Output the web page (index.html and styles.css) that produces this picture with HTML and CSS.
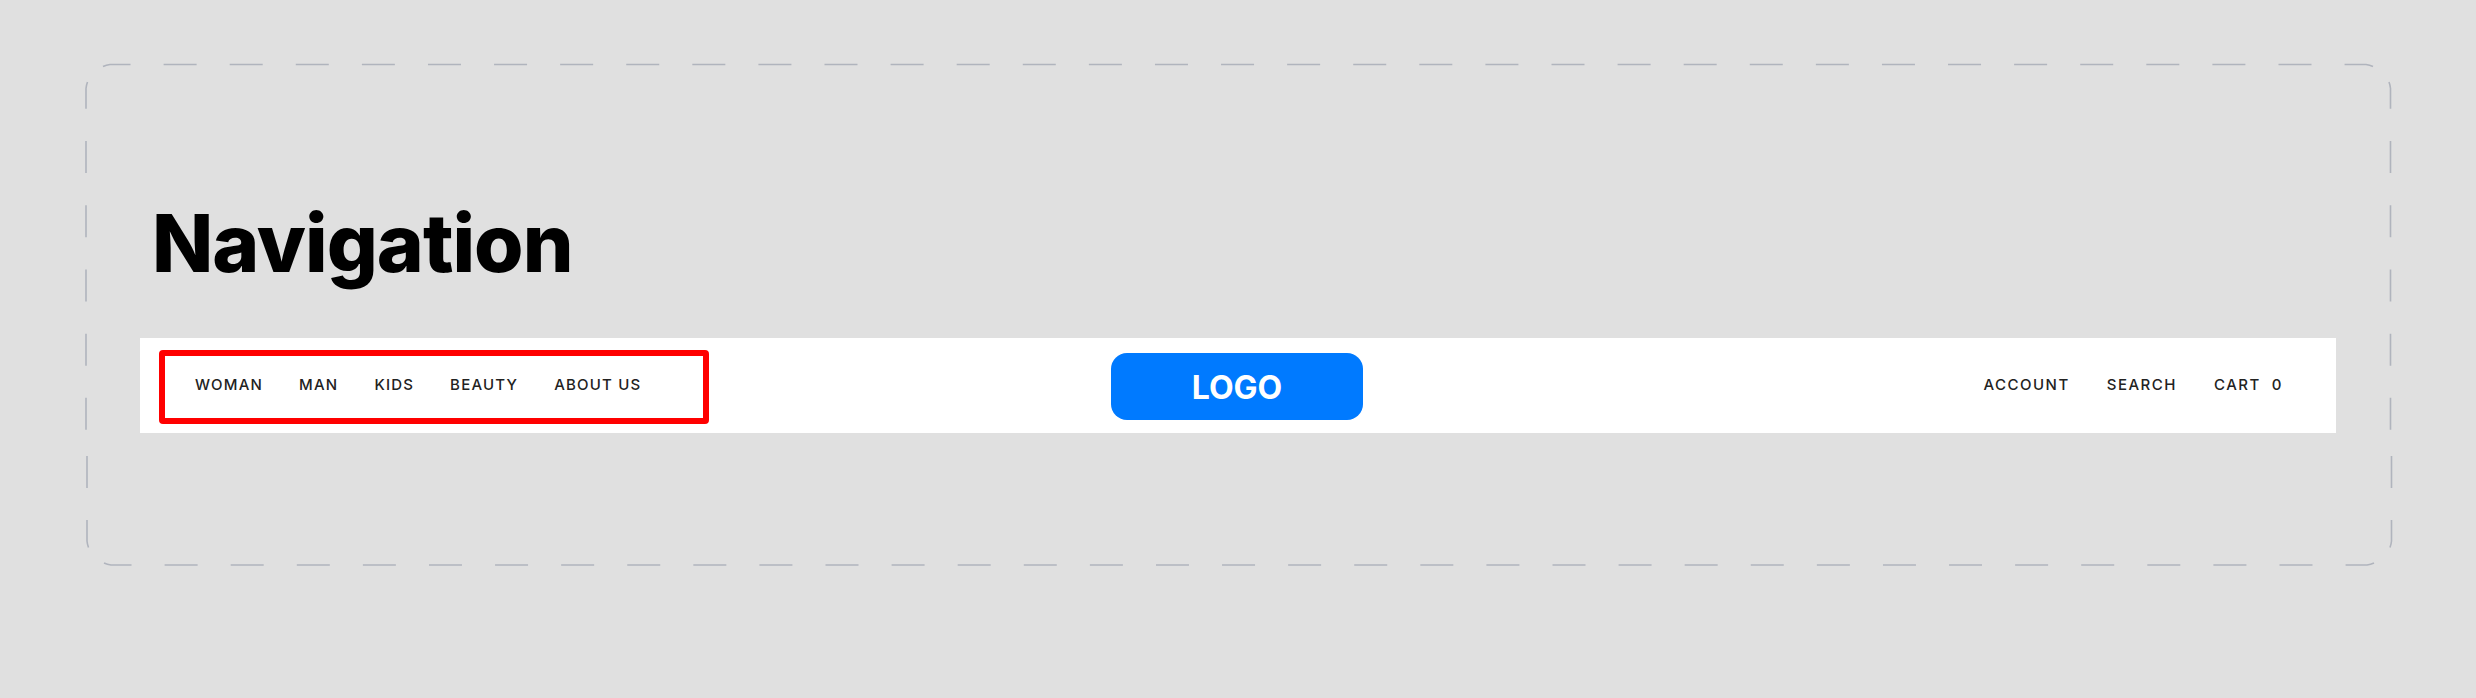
FILE: index.html
```html
<!DOCTYPE html>
<html lang="en">
<head>
<meta charset="utf-8">
<title>Navigation</title>
<link rel="stylesheet" href="styles.css">
</head>
<body>
<svg class="frame" width="2476" height="698" viewBox="0 0 2476 698" aria-hidden="true">
  <path class="h" d="M103 66.5A24 24 0 0 1 110 64.5H2366A24 24 0 0 1 2373 66.5"/>
  <path class="h" d="M104 563A24 24 0 0 0 111 565H2367A24 24 0 0 0 2374 563"/>
  <path class="v" d="M87.5 82A24 24 0 0 0 86 88.5V431"/>
  <path class="w" d="M87 456V541A24 24 0 0 0 88.5 547.5"/>
  <path class="v" d="M2389 82A24 24 0 0 1 2390.5 88.5V431"/>
  <path class="w" d="M2391.5 456V541A24 24 0 0 1 2390 547.5"/>
</svg>
<main class="page">
  <h1 class="title">Navigation</h1>
  <nav class="bar">
    <div class="left">
      <ul class="links outlined">
        <li>WOMAN</li>
        <li>MAN</li>
        <li>KIDS</li>
        <li>BEAUTY</li>
        <li>ABOUT US</li>
      </ul>
    </div>
    <div class="logo">LOGO</div>
    <ul class="links right">
      <li>ACCOUNT</li>
      <li>SEARCH</li>
      <li class="cart"><span>CART</span><span>0</span></li>
    </ul>
  </nav>
</main>
</body>
</html>
```
FILE: styles.css
```css
* { box-sizing: border-box; }
html, body { margin: 0; height: 698px; overflow: hidden; }
body { background: #e0e0e0; position: relative; font-family: "Inter", "Liberation Sans", sans-serif; }
.frame { position: absolute; left: 0; top: 0; pointer-events: none; }
.frame path { fill: none; stroke: #b0b4bd; stroke-width: 1.6; }
.frame .h { stroke-dasharray: 33 33.09; stroke-dashoffset: 5.2; }
.frame .v { stroke-dasharray: 32 32.2; stroke-dashoffset: 5; }
.frame .w { stroke-dasharray: 32 32; }
.page { padding: 200px 140px 0; }
.title { margin: -2px 0 0 12px; height: 140px; font-size: 80px; line-height: 90px; font-weight: 800; letter-spacing: -1px; color: #000; }
.bar { display: grid; grid-template-columns: 1fr auto 1fr; align-items: center; height: 95px; background: #fff; }
.links { display: flex; align-items: center; margin: 0; padding: 0; list-style: none; font-size: 15px; font-weight: 500; letter-spacing: 1.2px; color: #222; }
.left { margin-top: 3px; padding-left: 19px; }
.outlined { width: 550px; height: 74px; padding: 0 0 5px 30px; gap: 36px; border: 6px solid #f00; border-radius: 4px; }
.logo { display: flex; align-items: center; justify-content: center; width: 252px; height: 67px; margin: 2px 2px 0 0; padding-top: 2px; border-radius: 16px; background: #007aff; color: #fff; font-size: 32px; font-weight: 700; }
.right { justify-content: flex-end; gap: 37px; margin-bottom: 2px; padding-right: 53px; letter-spacing: 1.5px; }
.cart { display: flex; gap: 11px; }
```
